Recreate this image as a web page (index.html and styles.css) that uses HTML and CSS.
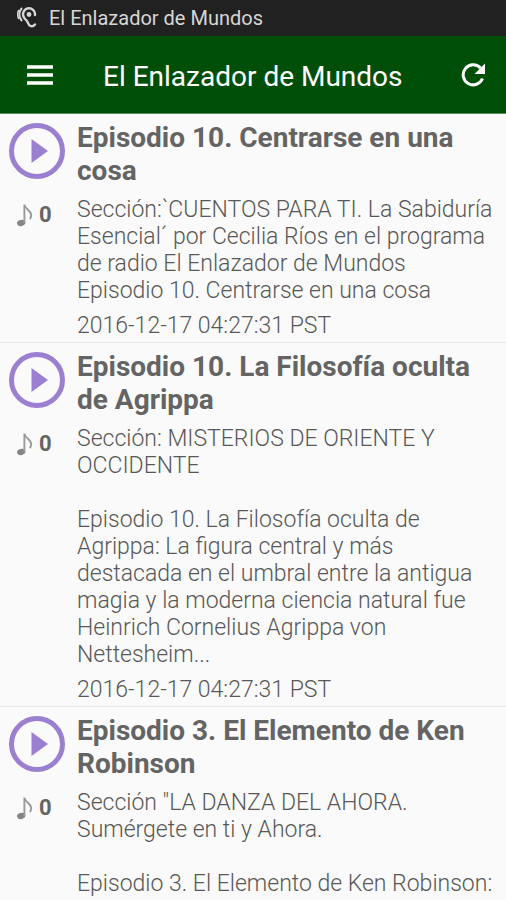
FILE: index.html
```html
<!DOCTYPE html>
<html lang="es">
<head>
<meta charset="utf-8">
<meta name="viewport" content="width=device-width, initial-scale=1">
<title>El Enlazador de Mundos</title>
<link rel="stylesheet" href="styles.css">
</head>
<body>
<svg class="defs" aria-hidden="true">
  <symbol id="play" viewBox="0 0 56 56">
    <circle cx="28" cy="28" r="25.500" fill="none" stroke="currentColor" stroke-width="5"/>
    <path d="M22.500 16v24L39 28z" fill="currentColor"/>
  </symbol>
  <symbol id="note" viewBox="0 0 16 24">
    <ellipse cx="4.200" cy="20" rx="4.200" ry="3" transform="rotate(-15 4.200 20)" fill="#858585"/>
    <path d="M7.400 20V1.500c.5 5 7.200 6 6.800 11-.1 1.500-.6 2.600-1.400 3.500" fill="none" stroke="#9a9a9a" stroke-width="1.900"/>
  </symbol>
</svg>
<div class="status">
  <svg class="ear" viewBox="0 0 20 22" aria-hidden="true">
    <g fill="none" stroke="currentColor" stroke-linecap="round" stroke-width="2.400">
      <path d="M18 8A6 6 0 1 0 7 10.500C8 12.500 10 13 11 16c1 3.500 4.500 4.500 7 1.500"/>
      <path d="M4.500 1.500A9.500 9.500 0 0 0 4.500 13.500" stroke-width="2"/>
      <path d="M1.500 3.500A10 10 0 0 0 1.500 11.500" stroke-width="1.500"/>
    </g>
    <circle cx="12" cy="7.500" r="2.400" fill="currentColor"/>
  </svg>
  <span>El Enlazador de Mundos</span>
</div>
<header class="bar">
  <button class="icon" type="button" aria-label="Menú">
    <svg class="menu" viewBox="0 0 26 20"><path d="M0 2h26M0 10h26M0 18h26" stroke="currentColor" stroke-width="3.600"/></svg>
  </button>
  <h1>El Enlazador de Mundos</h1>
  <button class="icon" type="button" aria-label="Actualizar">
    <svg class="reload" viewBox="0 0 24 24"><path d="M21.500 15.500A10 10 0 1 1 19.500 5" fill="none" stroke="currentColor" stroke-width="3"/><path d="M24 .5v10.500H13.500z" fill="currentColor"/></svg>
  </button>
</header>
<main>
  <article class="item">
    <div class="side">
      <button class="play" type="button" aria-label="Reproducir"><svg><use href="#play"/></svg></button>
      <div class="count"><svg class="note" aria-hidden="true"><use href="#note"/></svg><b>0</b></div>
    </div>
    <div class="text">
      <h2>Episodio 10. Centrarse en una cosa</h2>
      <p>Sección:`CUENTOS PARA TI. La Sabiduría Esencial´ por Cecilia Ríos en el programa de radio El Enlazador de Mundos<br>Episodio 10. Centrarse en una cosa</p>
      <time>2016-12-17 04:27:31 PST</time>
    </div>
  </article>
  <article class="item">
    <div class="side">
      <button class="play" type="button" aria-label="Reproducir"><svg><use href="#play"/></svg></button>
      <div class="count"><svg class="note" aria-hidden="true"><use href="#note"/></svg><b>0</b></div>
    </div>
    <div class="text">
      <h2>Episodio 10. La Filosofía oculta de Agrippa</h2>
      <p>Sección: MISTERIOS DE ORIENTE Y OCCIDENTE<br><br>Episodio 10. La Filosofía oculta de Agrippa: La figura central y más destacada en el umbral entre la antigua magia y la moderna ciencia natural fue Heinrich Cornelius Agrippa von Nettesheim...</p>
      <time>2016-12-17 04:27:31 PST</time>
    </div>
  </article>
  <article class="item">
    <div class="side">
      <button class="play" type="button" aria-label="Reproducir"><svg><use href="#play"/></svg></button>
      <div class="count"><svg class="note" aria-hidden="true"><use href="#note"/></svg><b>0</b></div>
    </div>
    <div class="text">
      <h2>Episodio 3. El Elemento de Ken Robinson</h2>
      <p>Sección "LA DANZA DEL AHORA. Sumérgete en ti y Ahora.<br><br>Episodio 3. El Elemento de Ken Robinson:</p>
    </div>
  </article>
</main>
</body>
</html>
```
FILE: styles.css
```css
* { box-sizing: border-box; }
html { overflow-x: hidden; scrollbar-width: none; }
body {
  margin: 0;
  background: #fafafa;
  color: #646464;
  font-family: Roboto, "Liberation Sans", sans-serif;
}
button { padding: 0; border: 0; background: none; color: inherit; }
svg { display: block; }
.defs { position: absolute; width: 0; height: 0; }
.status {
  display: flex;
  align-items: center;
  gap: 12px;
  height: 36px;
  padding: 0 17px;
  background: #212121;
  color: #d6d6d6;
  font-size: 20px;
}
.ear { width: 20px; height: 22px; }
.bar {
  display: flex;
  align-items: center;
  height: 78px;
  padding: 0 13px 0 20px;
  border-bottom: 1px solid #5d8a5d;
  background: #004f08;
  color: #fff;
}
.icon { display: grid; place-items: center; width: 40px; height: 48px; }
.menu { width: 26px; height: 20px; }
.reload { width: 24px; height: 24px; }
h1 {
  flex: 1;
  margin: 0;
  padding: 3px 0 0 43px;
  font-size: 28px;
  font-weight: 400;
}
.item {
  display: flex;
  gap: 11px;
  padding: 7px 6px 3px 9px;
  border-bottom: 1px solid #ebebeb;
}
.side { flex: none; width: 57px; }
.play { display: block; margin-top: 2px; color: #9b7fd0; }
.play svg { width: 56px; height: 56px; }
.count {
  display: flex;
  align-items: center;
  gap: 6px;
  margin-top: 23px;
  padding-left: 8px;
  font-size: 22px;
}
.note { width: 16px; height: 24px; }
h2 {
  margin: 0;
  font-size: 28px;
  line-height: 33px;
}
p { margin: 9px 0 8px; }
p, time {
  color: #585858;
  font-size: 23px;
  font-weight: 300;
  line-height: 27px;
}
.text { flex: 1; min-width: 0; }
time { display: block; }
```
